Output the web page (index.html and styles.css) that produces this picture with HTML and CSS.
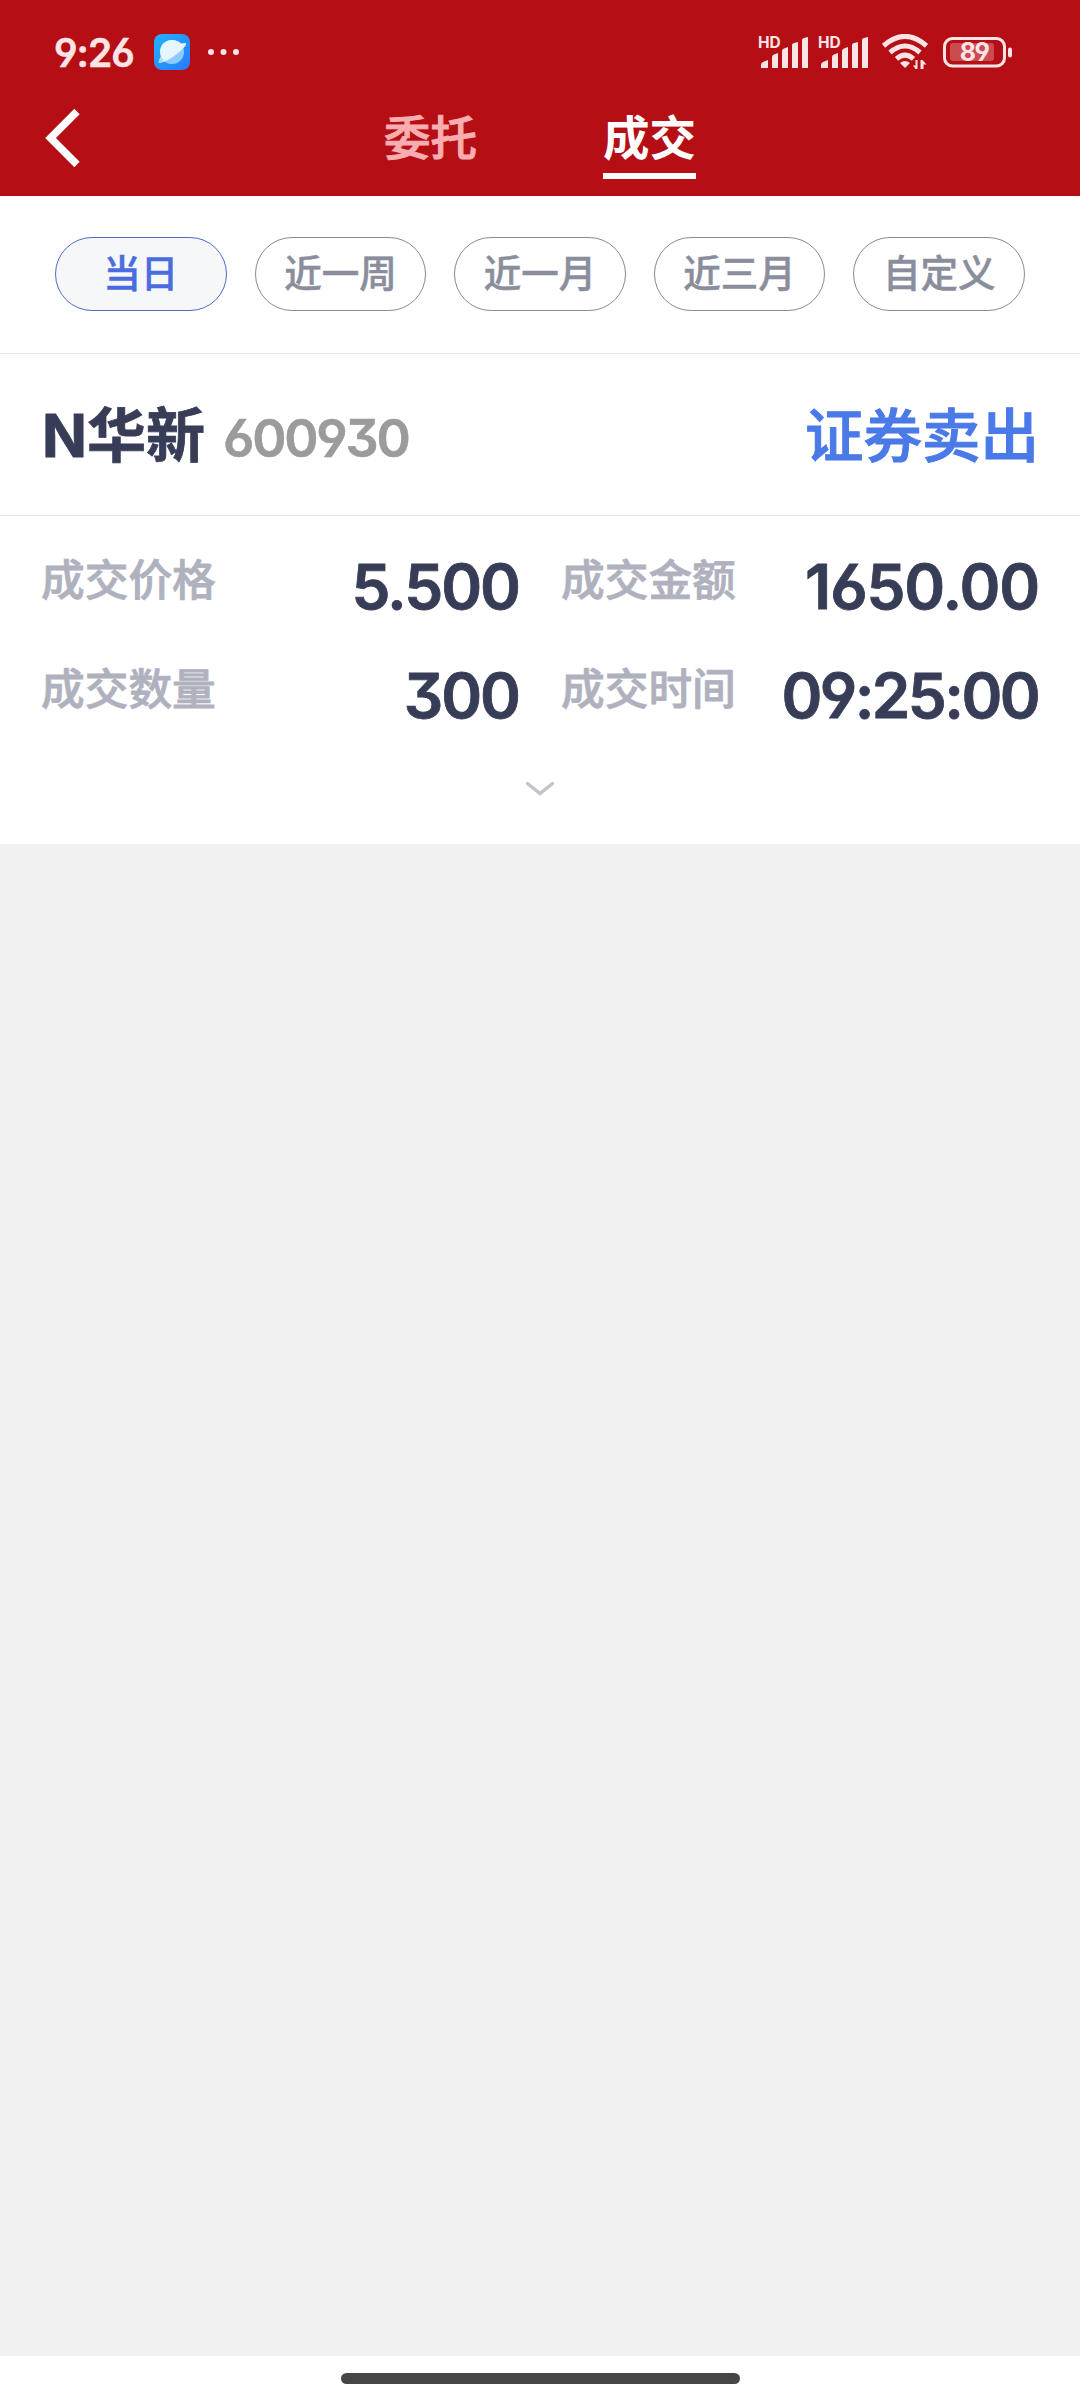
FILE: index.html
```html
<!DOCTYPE html>
<html lang="zh-CN">
<head>
    <meta charset="UTF-8">
    <meta name="viewport" content="width=device-width, initial-scale=1.0">
    <title>成交</title>
    <link rel="stylesheet" href="styles.css">
</head>
<body>
    <header class="header">
        <div class="status-bar">
            <span class="clock">9:26</span>
            <svg class="app-icon" viewBox="0 0 36 36">
                <defs>
                    <linearGradient id="sky" x1="0" y1="0" x2="1" y2="1">
                        <stop offset="0" stop-color="#20b4ff"/>
                        <stop offset="1" stop-color="#2a78ff"/>
                    </linearGradient>
                </defs>
                <rect width="36" height="36" rx="8" fill="url(#sky)"/>
                <circle cx="18" cy="18" r="12" fill="#8ccbff"/>
                <path d="M5 29C4 27 6 24.500 7 22.500C4 14 9 6 18 6C22 6 25 7.500 27 9.500L31.500 9C33 10 31 13 28 15.500C22 21.500 12 28.500 5 29Z" fill="#e6f6ff"/>
                <path d="M5 29C4 27 6 24.500 7 22.500L10 26.800Z" fill="#a5dcff"/>
            </svg>
            <svg class="more" viewBox="0 0 32 6">
                <circle cx="3" cy="3" r="3"/>
                <circle cx="15.500" cy="3" r="3"/>
                <circle cx="28" cy="3" r="3"/>
            </svg>
            <div class="status-right">
                <svg class="signal" viewBox="0 0 50 34">
                    <text x="-1" y="13">HD</text>
                    <path d="M2 33V30Q2 28 4 27L9 25V33Z"/>
                    <path d="M13 33V22Q13 20 15 19.500L19 18V33Z"/>
                    <path d="M23 33V16Q23 14 25 13.500L29 12V33Z"/>
                    <path d="M33 33V10Q33 8.500 35 8L39 7V33Z"/>
                    <path d="M43 33V5Q43 3.500 45 3L49 2V33Z"/>
                </svg>
                <svg class="signal" viewBox="0 0 50 34">
                    <text x="-1" y="13">HD</text>
                    <path d="M2 33V30Q2 28 4 27L9 25V33Z"/>
                    <path d="M13 33V22Q13 20 15 19.500L19 18V33Z"/>
                    <path d="M23 33V16Q23 14 25 13.500L29 12V33Z"/>
                    <path d="M33 33V10Q33 8.500 35 8L39 7V33Z"/>
                    <path d="M43 33V5Q43 3.500 45 3L49 2V33Z"/>
                </svg>
                <svg class="wifi" viewBox="0 0 46 36">
                    <path class="wave" d="M1.500 11.800Q23 -7 44.500 11.800"/>
                    <path class="wave" d="M8 18.500Q23 5.500 38 18.500"/>
                    <path class="wave" d="M14.500 24.800Q23 17.500 31.500 24.800"/>
                    <path d="M18 29Q23 25 28 29L23 34Z"/>
                    <path d="M35.500 26V35H33.500L31 31.500H33.500V26ZM38.500 35V26H40.500L44.500 30.500H41.500V35Z"/>
                </svg>
                <svg class="battery" viewBox="0 0 70 32">
                    <rect class="shell" x="1.500" y="2.500" width="60" height="27.500" rx="8"/>
                    <rect class="charge" x="7" y="7" width="44" height="18" rx="3"/>
                    <rect x="65" y="11.500" width="4" height="10" rx="2"/>
                    <text x="31" y="25" text-anchor="middle">89</text>
                </svg>
            </div>
        </div>
        <nav class="nav">
            <svg class="back" viewBox="0 0 36 60">
                <path d="M33 3.500L6.500 30L33 56.500"/>
            </svg>
            <div class="tabs">
                <a class="tab">委托</a>
                <a class="tab active">成交</a>
            </div>
        </nav>
    </header>

    <div class="filters">
        <div class="chip active">当日</div>
        <div class="chip">近一周</div>
        <div class="chip">近一月</div>
        <div class="chip">近三月</div>
        <div class="chip">自定义</div>
    </div>

    <section class="deal">
        <div class="deal-head">
            <span class="name">N华新</span>
            <span class="code">600930</span>
            <span class="side">证券卖出</span>
        </div>
        <div class="deal-body">
            <div class="item">
                <span class="label">成交价格</span>
                <span class="value">5.500</span>
            </div>
            <div class="item">
                <span class="label">成交金额</span>
                <span class="value amount">1650.00</span>
            </div>
            <div class="item">
                <span class="label">成交数量</span>
                <span class="value">300</span>
            </div>
            <div class="item">
                <span class="label">成交时间</span>
                <span class="value time">09:25:00</span>
            </div>
        </div>
        <svg class="expand" viewBox="0 0 30 16">
            <path d="M2.500 2.500L15 12.500L27.500 2.500"/>
        </svg>
    </section>

    <main class="blank"></main>

    <footer class="home-bar">
        <div class="handle"></div>
    </footer>
</body>
</html>
```
FILE: styles.css
```css
* {
    box-sizing: border-box;
}
body {
    margin: 0;
    height: 2400px;
    display: flex;
    flex-direction: column;
    background-color: #f1f1f1;
    font-family: Inter, "Noto Sans CJK SC", sans-serif;
    font-feature-settings: "ss01", "cv09";
    font-weight: 500;
    overflow: hidden;
}
svg {
    display: block;
    flex: none;
}

/* Header */
.header {
    height: 196px;
    background-color: #b50f15;
}
.status-bar {
    height: 104px;
    padding: 0 67px 0 54px;
    display: flex;
    align-items: center;
    fill: #fbe4e6;
    color: #fbe4e6;
}
.clock {
    width: 100px;
    font-size: 39px;
    font-weight: 600;
    letter-spacing: -1px;
    -webkit-text-stroke: 0.5px;
}
.app-icon {
    width: 36px;
    height: 36px;
}
.more {
    width: 32px;
    height: 6px;
    margin-left: 18px;
}
.status-right {
    margin-left: auto;
    display: flex;
    align-items: center;
}
.signal {
    width: 50px;
    height: 34px;
    margin-right: 10px;
    overflow: visible;
}
.signal text {
    font-size: 15.5px;
    font-weight: 700;
}
.wifi {
    width: 46px;
    height: 36px;
    margin: 0 15px 0 3px;
}
.wave {
    fill: none;
    stroke: #fbe4e6;
    stroke-width: 5;
}
.battery {
    width: 70px;
    height: 32px;
}
.battery .shell {
    fill: none;
    stroke: #fbe4e6;
    stroke-width: 3;
}
.battery .charge {
    fill: #cb4b50;
}
.battery text {
    font-size: 25px;
    font-weight: 700;
    letter-spacing: -1.5px;
}
.nav {
    height: 92px;
    padding-left: 44px;
    display: flex;
}
.back {
    width: 36px;
    height: 60px;
    margin-top: 4px;
    fill: none;
    stroke: #fff;
    stroke-width: 7.5;
}
.tabs {
    display: flex;
    gap: 126px;
    margin-left: 304px;
}
.tab {
    height: 75px;
    font-size: 46.5px;
    line-height: 68px;
    color: #f8adb0;
    -webkit-text-stroke: 1px;
    border-bottom: 6px solid transparent;
}
.tab.active {
    color: #fff;
    font-weight: 700;
    -webkit-text-stroke: 0;
    border-color: #fff;
}

/* Date filters */
.filters {
    height: 158px;
    padding: 41px 55px 0;
    display: flex;
    gap: 28px;
    background-color: #fff;
    border-bottom: 1px solid #e3e3e5;
}
.chip {
    flex: 1;
    height: 74px;
    border: 1px solid #888b95;
    border-radius: 37px;
    text-align: center;
    font-size: 37.5px;
    line-height: 71px;
    color: #8a8e9c;
    -webkit-text-stroke: 0.5px;
}
.chip.active {
    color: #4b6ce0;
    background-color: #f6f7f8;
    border-color: #4b6cc8;
}

/* Deal card */
.deal {
    height: 490px;
    background-color: #fff;
}
.deal-head {
    height: 162px;
    padding: 3px 41px 0 42px;
    display: flex;
    align-items: baseline;
    line-height: 158px;
    border-bottom: 1px solid #e3e3e5;
}
.name {
    font-size: 59px;
    font-weight: 700;
    color: #383d57;
    -webkit-text-stroke: 0.8px;
}
.code {
    margin-left: 18px;
    font-size: 52px;
    font-weight: 600;
    letter-spacing: -2.2px;
    color: #9b9b9b;
    -webkit-text-stroke: 0.5px;
}
.side {
    margin-left: auto;
    font-size: 58.5px;
    color: #4a7ae8;
    -webkit-text-stroke: 1px;
}
.deal-body {
    padding: 16px 41px 0;
    display: grid;
    grid-template-columns: 478px 478px;
    grid-auto-rows: 109px;
    column-gap: 42px;
}
.item {
    display: flex;
    justify-content: space-between;
}
.label {
    font-size: 43.7px;
    line-height: 98px;
    color: #afb2be;
    -webkit-text-stroke: 0.8px;
}
.value {
    font-size: 62px;
    font-weight: 600;
    line-height: 109px;
    letter-spacing: -2px;
    color: #383d57;
    -webkit-text-stroke: 0.8px;
}
.value.amount {
    letter-spacing: -1.1px;
}
.value.time {
    margin-right: 1px;
    letter-spacing: -2.6px;
}
.expand {
    width: 30px;
    height: 16px;
    margin: 31px auto 0;
    fill: none;
    stroke: #c2c4cb;
    stroke-width: 3.4;
    stroke-linecap: round;
}

.blank {
    flex: 1;
}

/* Gesture bar */
.home-bar {
    height: 44px;
    padding-top: 17px;
    background-color: #fff;
}
.handle {
    width: 399px;
    height: 11px;
    margin: 0 auto;
    border-radius: 6px;
    background-color: #464646;
}
```
